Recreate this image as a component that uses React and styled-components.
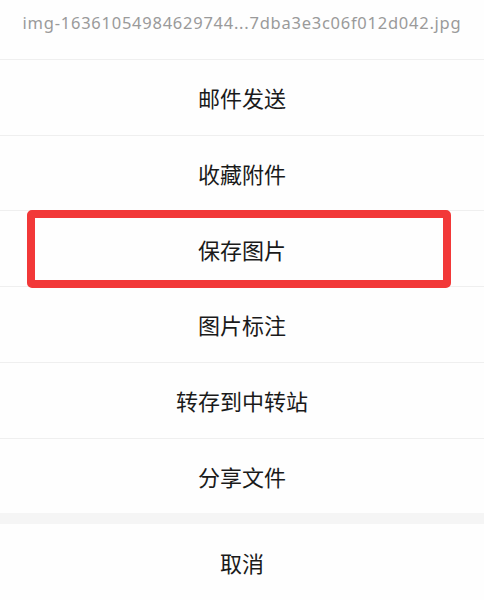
import React from 'react'
import styled, { createGlobalStyle } from 'styled-components'

const GlobalStyle = createGlobalStyle`
html, body {
    margin: 0;
    padding: 0;
    background: #fefefe;
}
body {
    font-family: "Noto Sans", "Noto Sans CJK SC", sans-serif;
}
`

const Sheet = styled.div`
width: 484px;
height: 600px;
background: #fefefe;
display: flex;
flex-direction: column;
overflow: hidden;
`

const Header = styled.div`
height: 59px;
box-sizing: border-box;
padding-top: 12px;
text-align: center;
font-size: 16.5px;
letter-spacing: 0.75px;
line-height: 22px;
color: #9a9a9a;
white-space: nowrap;
`

const Item = styled.div`
position: relative;
height: 76px;
box-sizing: border-box;
border-top: ${props => props.plain ? 'none' : '1px solid #efefef'};
display: flex;
align-items: center;
justify-content: center;
font-family: "Noto Sans CJK SC", sans-serif;
font-size: 22px;
color: #1a1a1a;
`

const Gap = styled.div`
height: 11px;
background: #f5f5f5;
`

const Highlight = styled.div`
position: absolute;
z-index: 2;
left: 27px;
right: 33px;
top: -1px;
bottom: -2px;
border: 8px solid #f23838;
border-radius: 5px;
pointer-events: none;
`

const items = ['邮件发送', '收藏附件', '保存图片', '图片标注', '转存到中转站', '分享文件']

const App = () => {
  return (
    <>
      <GlobalStyle />
      <Sheet>
        <Header>img-16361054984629744...7dba3e3c06f012d042.jpg</Header>
        {items.map((label, i) => (
          <Item key={label}>
            {label}
            {i === 2 && <Highlight />}
          </Item>
        ))}
        <Gap />
        <Item plain>取消</Item>
      </Sheet>
    </>
  )
}

export default App
